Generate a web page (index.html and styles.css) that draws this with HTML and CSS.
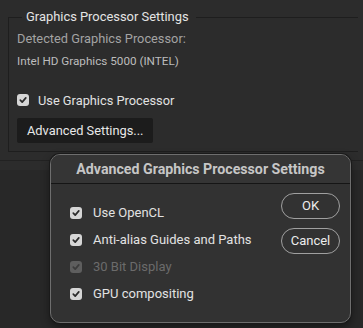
FILE: index.html
```html
<!DOCTYPE html>
<html>
<head>
<meta charset="utf-8">
<link rel="stylesheet" href="styles.css">
</head>
<body>
<div class="panel">
  <fieldset class="group">
    <legend class="group-title">Graphics Processor Settings</legend>
    <div class="detected">Detected Graphics Processor:</div>
    <div class="gpu-name">Intel HD Graphics 5000 (INTEL)</div>
    <div class="check main-check">
      <span class="box"><svg viewBox="0 0 12 12" width="12" height="12"><path d="M3.3 6.2 L5.2 8.1 L8.8 3.9" fill="none" stroke="#2b2b2b" stroke-width="1.7" stroke-linecap="round" stroke-linejoin="round"/></svg></span>
      <span>Use Graphics Processor</span>
    </div>
    <div class="adv-btn">Advanced Settings...</div>
  </fieldset>
  <div class="rule"></div>
</div>

<div class="dialog">
  <div class="dlg-title">Advanced Graphics Processor Settings</div>
  <div class="dlg-body">
    <div class="options">
      <div class="check opt">
        <span class="box"><svg viewBox="0 0 12 12" width="12" height="12"><path d="M3.3 6.2 L5.2 8.1 L8.8 3.9" fill="none" stroke="#2b2b2b" stroke-width="1.7" stroke-linecap="round" stroke-linejoin="round"/></svg></span>
        <span>Use OpenCL</span>
      </div>
      <div class="check opt">
        <span class="box"><svg viewBox="0 0 12 12" width="12" height="12"><path d="M3.3 6.2 L5.2 8.1 L8.8 3.9" fill="none" stroke="#2b2b2b" stroke-width="1.7" stroke-linecap="round" stroke-linejoin="round"/></svg></span>
        <span>Anti-alias Guides and Paths</span>
      </div>
      <div class="check opt disabled">
        <span class="box"><svg viewBox="0 0 12 12" width="12" height="12"><path d="M3.3 6.2 L5.2 8.1 L8.8 3.9" fill="none" stroke="#3c3c3c" stroke-width="1.7" stroke-linecap="round" stroke-linejoin="round"/></svg></span>
        <span>30 Bit Display</span>
      </div>
      <div class="check opt">
        <span class="box"><svg viewBox="0 0 12 12" width="12" height="12"><path d="M3.3 6.2 L5.2 8.1 L8.8 3.9" fill="none" stroke="#2b2b2b" stroke-width="1.7" stroke-linecap="round" stroke-linejoin="round"/></svg></span>
        <span>GPU compositing</span>
      </div>
    </div>
    <div class="actions">
      <div class="pill">OK</div>
      <div class="pill">Cancel</div>
    </div>
  </div>
</div>
</body>
</html>
```

FILE: styles.css
```css
html, body {
  margin: 0;
  padding: 0;
}
body {
  width: 363px;
  height: 328px;
  overflow: hidden;
  background: #282828;
  font-family: Roboto, "Liberation Sans", sans-serif;
  position: relative;
}
.panel {
  background: #2c2c2c;
  padding-top: 9px;
  height: 161px;
}
.group {
  margin: 0 5px 0 8px;
  padding: 6px 0 8px 8px;
  border: 1px solid #1e1e1e;
  border-right: none;
  min-inline-size: 0;
}
.group-title {
  margin-left: 5px;
  padding: 0 7px 0 4px;
  font-size: 12.9px;
  line-height: 16px;
  color: #e4e4e4;
}
.detected {
  font-size: 12.8px;
  line-height: 16px;
  color: #a3a3a3;
}
.gpu-name {
  margin-top: 7px;
  font-size: 11.7px;
  line-height: 14px;
  color: #bcbcbc;
}
.check {
  display: flex;
  align-items: center;
  height: 16px;
  font-size: 12.8px;
  color: #e2e2e2;
}
.box {
  width: 12px;
  height: 12px;
  border-radius: 3px;
  background: #d6d6d6;
  display: flex;
  flex: none;
}
.box svg {
  display: block;
}
.main-check {
  margin-top: 24px;
  gap: 9px;
}
.adv-btn {
  margin-top: 10px;
  width: 136px;
  height: 25px;
  box-sizing: border-box;
  padding-left: 10px;
  background: #1c1c1c;
  border-radius: 2px;
  color: #e8e8e8;
  font-size: 12.8px;
  line-height: 25px;
}
.rule {
  margin-top: 8px;
  border-top: 1px solid #222;
}
.dialog {
  position: absolute;
  left: 50px;
  top: 154px;
  width: 301px;
  height: 169px;
  box-sizing: border-box;
  border: 1px solid #6e6e6e;
  border-radius: 10px;
  background: #323232;
  box-shadow: 0 0 0 1px #1a1a1a, 0 4px 10px rgba(0, 0, 0, 0.45);
  overflow: hidden;
}
.dlg-title {
  height: 28px;
  line-height: 28px;
  text-align: center;
  font-weight: bold;
  font-size: 14.2px;
  color: #c6c6c6;
  background: #353535;
  border-bottom: 1px solid #151515;
}
.dlg-body {
  display: flex;
  justify-content: space-between;
  padding: 9px 10px 0 19px;
}
.options {
  margin-top: 6px;
  display: flex;
  flex-direction: column;
}
.opt {
  height: 27px;
  gap: 11px;
  font-size: 13px;
}
.opt.disabled {
  color: #6b6b6b;
}
.opt.disabled .box {
  background: #5e5e5e;
}
.actions {
  display: flex;
  flex-direction: column;
  gap: 9px;
}
.pill {
  width: 59px;
  height: 26px;
  box-sizing: border-box;
  border: 1px solid #a0a0a0;
  border-radius: 13px;
  text-align: center;
  line-height: 24px;
  font-size: 13px;
  color: #ececec;
}
```
